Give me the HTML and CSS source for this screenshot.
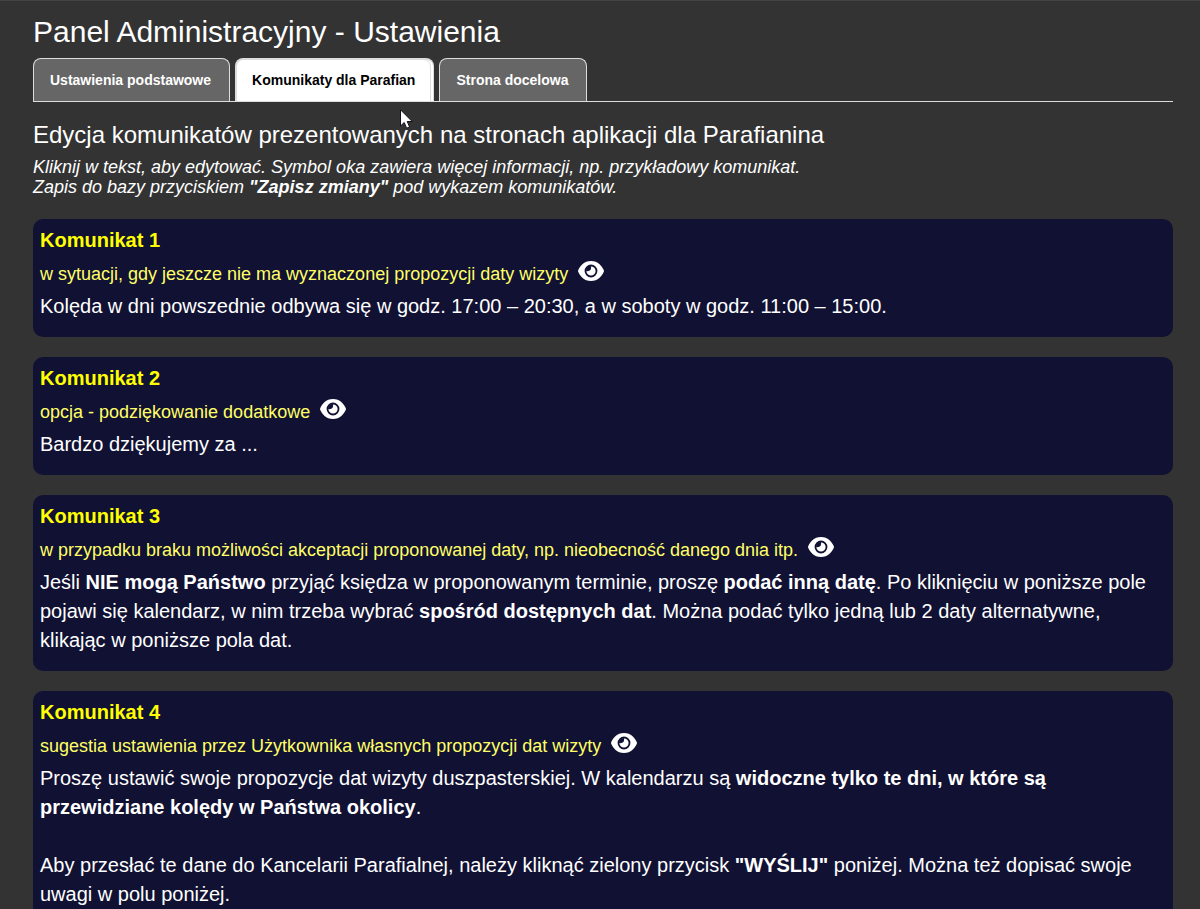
FILE: index.html
```html
<!DOCTYPE html>
<html lang="pl">
<head>
<meta charset="utf-8">
<title>Panel Administracyjny - Ustawienia</title>
<meta name="viewport" content="width=device-width, initial-scale=1">
<link rel="stylesheet" href="styles.css">
</head>
<body>
<svg class="sprite" aria-hidden="true">
  <symbol id="eye" viewBox="0 0 26 20">
    <path fill="#fff" d="M13 0C20 0 24 5 25.700 9Q26.200 10 25.700 11C24 15 20 20 13 20S2 15 .3 11Q-.2 10 .3 9C2 5 6 0 13 0Z"/>
    <circle cx="13" cy="10" r="5.500" fill="#fff" stroke="#111133" stroke-width="1.800"/>
    <path fill="#111133" d="M8 10A5 5 0 0 1 13 5Q13.500 7.500 12.500 9Q11 10.500 8 10Z"/>
  </symbol>
</svg>
<main class="panel">
  <h1 class="panel-title">Panel Administracyjny - Ustawienia</h1>
  <nav class="tabs">
    <a class="tab" href="#podstawowe">Ustawienia podstawowe</a>
    <a class="tab tab-active" href="#komunikaty" aria-current="page">Komunikaty dla Parafian</a>
    <a class="tab" href="#strona">Strona docelowa</a>
  </nav>
  <section id="komunikaty">
    <h2 class="section-title">Edycja komunikatów prezentowanych na stronach aplikacji dla Parafianina</h2>
    <p class="intro">Kliknij w tekst, aby edytować. Symbol oka zawiera więcej informacji, np. przykładowy komunikat.<br>Zapis do bazy przyciskiem <strong>"Zapisz zmiany"</strong> pod wykazem komunikatów.</p>
    <div class="messages">
      <article class="card">
        <h3 class="card-title">Komunikat 1</h3>
        <div class="card-note">w sytuacji, gdy jeszcze nie ma wyznaczonej propozycji daty wizyty <button class="preview" type="button" aria-label="Podgląd"><svg class="eye"><use href="#eye"/></svg></button></div>
        <p class="card-text">Kolęda w dni powszednie odbywa się w godz. 17:00 – 20:30, a w soboty w godz. 11:00 – 15:00.</p>
      </article>
      <article class="card">
        <h3 class="card-title">Komunikat 2</h3>
        <div class="card-note">opcja - podziękowanie dodatkowe <button class="preview" type="button" aria-label="Podgląd"><svg class="eye"><use href="#eye"/></svg></button></div>
        <p class="card-text">Bardzo dziękujemy za ...</p>
      </article>
      <article class="card">
        <h3 class="card-title">Komunikat 3</h3>
        <div class="card-note">w przypadku braku możliwości akceptacji proponowanej daty, np. nieobecność danego dnia itp. <button class="preview" type="button" aria-label="Podgląd"><svg class="eye"><use href="#eye"/></svg></button></div>
        <p class="card-text">Jeśli <strong>NIE mogą Państwo</strong> przyjąć księdza w proponowanym terminie, proszę <strong>podać inną datę</strong>. Po kliknięciu w poniższe pole pojawi się kalendarz, w nim trzeba wybrać <strong>spośród dostępnych dat</strong>. Można podać tylko jedną lub 2 daty alternatywne, klikając w poniższe pola dat.</p>
      </article>
      <article class="card">
        <h3 class="card-title">Komunikat 4</h3>
        <div class="card-note">sugestia ustawienia przez Użytkownika własnych propozycji dat wizyty <button class="preview" type="button" aria-label="Podgląd"><svg class="eye"><use href="#eye"/></svg></button></div>
        <p class="card-text">Proszę ustawić swoje propozycje dat wizyty duszpasterskiej. W kalendarzu są <strong>widoczne tylko te dni, w które są przewidziane kolędy w Państwa okolicy</strong>.<br><br>Aby przesłać te dane do Kancelarii Parafialnej, należy kliknąć zielony przycisk <strong>"WYŚLIJ"</strong> poniżej. Można też dopisać swoje uwagi w polu poniżej.</p>
      </article>
    </div>
  </section>
</main>
<svg class="cursor" viewBox="0 0 13 20" aria-hidden="true"><path d="M.5 .8V17L4.200 13.500L6.600 19.200L9.600 18L7.200 12.500H12.200Z" fill="#fff" stroke="#112" stroke-width="1"/></svg>
</body>
</html>
```

FILE: styles.css
```css
* {
  box-sizing: border-box;
}

body {
  margin: 0;
  border-top: 1px solid #444;
  background: #333;
  color: #fff;
  font-family: "Liberation Sans", Arial, sans-serif;
  font-size: 20px;
  line-height: 29px;
}

.sprite {
  position: absolute;
  width: 0;
  height: 0;
}

.panel {
  padding: 13px 27px 0 33px;
}

.panel-title {
  margin: 0;
  font-size: 30px;
  font-weight: 400;
  line-height: 36px;
}

.tabs {
  display: flex;
  gap: 5px;
  margin-top: 8px;
  border-bottom: 1px solid #ddd;
}

.tab {
  padding: 0 18px 0 16px;
  border: 1px solid #ddd;
  border-bottom: 0;
  border-radius: 8px 8px 0 0;
  background: #666;
  color: #fff;
  font-size: 14px;
  font-weight: 700;
  line-height: 42px;
  text-decoration: none;
}

.tab-active {
  padding: 0 18px 0 15px;
  border-width: 2px 1px 0 2px;
  background: #fff;
  box-shadow: inset -2px 0 #fff, inset -3px 0 #ddd;
  color: #000;
  line-height: 41px;
}

.section-title {
  margin: 18px 0 0;
  font-size: 24px;
  font-weight: 400;
  line-height: 30px;
}

.intro {
  margin: 7px 0 0;
  font-size: 18px;
  font-style: italic;
  line-height: 20px;
}

.messages {
  display: grid;
  gap: 20px;
  margin-top: 22px;
}

.card {
  padding: 7px 7px 16px;
  border-radius: 10px;
  background: #111133;
}

.card-title {
  margin: 0;
  color: #ff0;
  font-size: 20px;
  line-height: 29px;
}

.card-note {
  display: flex;
  align-items: center;
  gap: 10px;
  min-height: 37px;
  color: #ffff66;
  font-size: 18px;
  line-height: 20px;
}

.preview {
  flex: none;
  padding: 0 0 5px;
  border: 0;
  background: none;
  cursor: pointer;
}

.eye {
  display: block;
  width: 26px;
  height: 20px;
}

.card-text {
  margin: 0;
}

.cursor {
  position: absolute;
  top: 109px;
  left: 400px;
  width: 13px;
  height: 20px;
}
```
